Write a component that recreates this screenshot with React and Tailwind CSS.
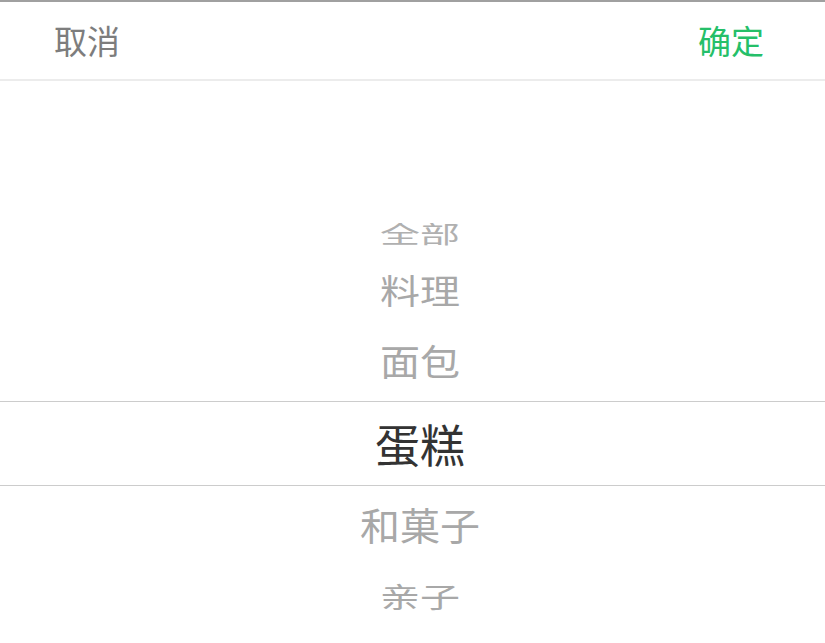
const items = [
  { label: "料理", box: "h-[60px]", text: "scale-y-[0.86]" },
  { label: "面包", box: "h-[82px]", text: "scale-y-[0.92]" },
];

const below = [
  { label: "和菓子", box: "h-[76px]", text: "scale-y-[0.95]" },
  { label: "亲子", box: "h-[68px]", text: "scale-y-[0.72]" },
];

const Row = ({ label, box, text }) => (
  <div className={`${box} flex items-center justify-center pl-[15px]`}>
    <span className={`${text} text-[40px] leading-none text-[#a8a8a8]`}>{label}</span>
  </div>
);

export default function App() {
  return (
    <div
      className="w-[825px] h-[643px] overflow-hidden bg-white"
      style={{ fontFamily: '"Noto Sans CJK SC", "Noto Sans", sans-serif' }}
    >
      {/* header */}
      <div className="h-[81px] border-t-2 border-b-2 border-t-[#a0a0a0] border-b-[#ececec] flex items-center justify-between pl-[54px] pr-[61px]">
        <button className="text-[33px] leading-none text-[#7d7d7d]">取消</button>
        <button className="text-[33px] leading-none text-[#25bf69]">确定</button>
      </div>

      {/* picker */}
      <div className="flex flex-col">
        <div className="h-[142px]" />
        <div className="h-[28px] overflow-hidden flex flex-col items-center pl-[15px]">
          <div className="h-[40px] -mt-[10px] flex items-center justify-center">
            <span className="scale-y-[0.6] text-[40px] leading-none text-[#b0b0b0]">全部</span>
          </div>
        </div>
        <div className="h-[8px]" />
        {items.map((it) => (
          <Row key={it.label} {...it} />
        ))}
        <div className="h-[85px] border-y border-[#cccccc] flex items-center justify-center pl-[15px]">
          <span className="text-[45px] leading-none text-[#333333]">蛋糕</span>
        </div>
        {below.map((it) => (
          <Row key={it.label} {...it} />
        ))}
      </div>
    </div>
  );
}
